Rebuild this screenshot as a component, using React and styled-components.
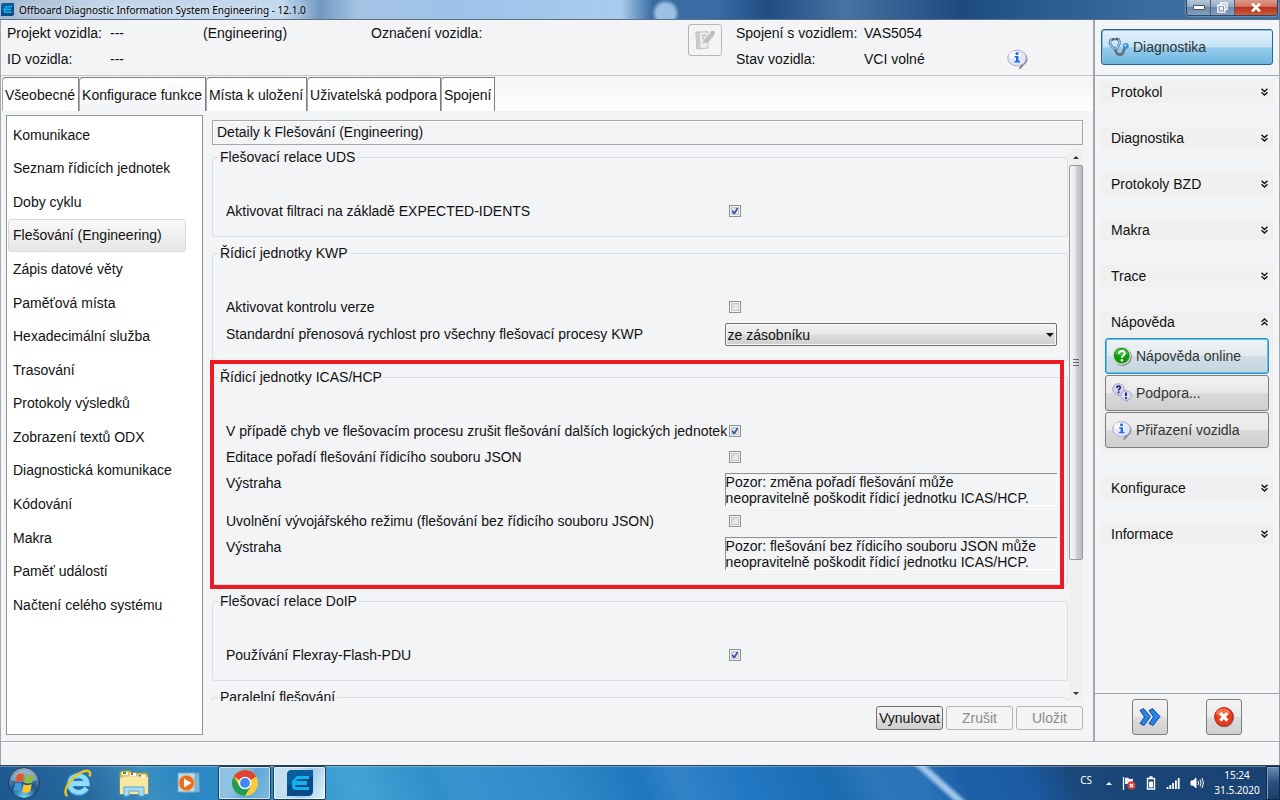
import * as React from 'react'
import styled, { createGlobalStyle, css } from 'styled-components'

const GlobalStyle = createGlobalStyle`
  *, *::before, *::after {
    box-sizing: border-box;
  }
  body {
    margin: 0;
    font-family: "Liberation Sans", Arial, sans-serif;
    font-size: 14px;
    line-height: 18px;
    color: #111;
    background: #f3f4f6;
  }
  button, input, select, textarea {
    font: inherit;
    color: inherit;
    margin: 0;
  }
`

const Screen = styled.div`
  height: 100vh;
  display: flex;
  flex-direction: column;
`

/* ---------- title bar ---------- */

const TitleBar = styled.header`
  height: 20px;
  flex: none;
  display: flex;
  align-items: center;
  gap: 5px;
  padding: 0 2px 0 1px;
  border-bottom: 1px solid #5e6f86;
  background:
    radial-gradient(circle at 52% 70%, #9cc0e4 0 9px, transparent 14px),
    linear-gradient(90deg, #a3b7d0 0, #c3d5e8 8%, #c2d8ee 22%, #7399c2 25%, #a4c3e4 28%, #9dc3e9 36%, #a9cbed 48.5%, #3a6ca3 51%, #3c6ba3 56%, #1f4d84 60%, #4573a2 66%, #1d4b80 75%, #2b5c92 82%, #3c6ca0 90%, #416f9f 100%);
`

const Title = styled.h1`
  flex: 1;
  margin: 0;
  font: 10px/18px "Noto Sans", sans-serif;
  color: #000;
  text-shadow: 0 0 6px #fff;
`

const WindowButtons = styled.div`
  display: flex;
  align-self: flex-start;
  height: 16px;
  border: 1px solid #31455c;
  border-top: 0;
  border-radius: 0 0 4px 4px;
  overflow: hidden;
  box-shadow: 0 0 2px #cfe0f0;
`

const WindowButton = styled.button`
  width: ${p => (p.$close ? 42 : 24)}px;
  padding: 0;
  display: flex;
  align-items: center;
  justify-content: center;
  border: 0;
  border-right: ${p => (p.$close ? 0 : '1px solid #4b5f76')};
  background: ${p => (p.$close
    ? 'linear-gradient(#dd9a8d, #d0705e 45%, #b8331c 50%, #cf5a3c)'
    : 'linear-gradient(#b6c6d8, #93a9c2 45%, #6c88a8 50%, #86a1bf)')};
`

/* ---------- application frame ---------- */

const Frame = styled.div`
  flex: 1;
  min-height: 0;
  display: flex;
  border-left: 1px solid #a5a8ad;
  border-right: 1px solid #a5a8ad;
`

const Main = styled.main`
  flex: 1;
  min-width: 0;
  display: flex;
  flex-direction: column;
`

const VehicleHeader = styled.section`
  height: 56px;
  flex: none;
  display: grid;
  grid-template-columns: 103fr 93fr 168fr 317fr 48fr 128fr 143fr 86fr;
  grid-template-rows: 26px 26px;
  align-items: center;
  padding-left: 6px;
  border-bottom: 1px solid #c4c6ca;
  white-space: nowrap;
`

const HeaderText = styled.span`
  grid-column: ${p => p.$col};
  grid-row: ${p => p.$row};
`

const HeaderIcon = styled(HeaderText)`
  display: flex;
`

const NoteButton = styled.button`
  grid-column: 5;
  grid-row: 1 / span 2;
  align-self: start;
  width: 34px;
  height: 32px;
  margin-top: 4px;
  padding: 0;
  display: flex;
  align-items: center;
  justify-content: center;
  border: 1px solid #b3b7ba;
  border-radius: 3px;
  background: #f4f4f4;
`

const TabStrip = styled.div`
  height: 35px;
  flex: none;
  display: flex;
  align-items: stretch;
  padding: 1px 0 0 1px;
  background: linear-gradient(#f3f4f6, #fff);
`

const Tab = styled.button`
  padding: 0 3px;
  white-space: nowrap;
  border: 1px solid #7d7f83;
  border-width: 1px 1px 0 0;
  border-radius: 4px 0 0 0;
  box-shadow: inset 1px 0 0 #a5a8ad;
  background: ${p => (p.$active ? 'linear-gradient(#fff, #f3f4f6)' : '#fff')};
`

const Workspace = styled.div`
  flex: 1;
  min-height: 0;
  display: flex;
  gap: 7px;
  padding: 4px 10px 6px 5px;
`

const FunctionList = styled.nav`
  width: 197px;
  flex: none;
  border: 1px solid #8f949c;
  background: #fff;
  padding: 2px 1px;
`

const FunctionItems = styled.ul`
  height: 82%;
  margin: 0;
  padding: 0;
  list-style: none;
  display: grid;
  grid-auto-rows: 1fr;
`

const FunctionItem = styled.button`
  width: 178px;
  height: 100%;
  padding: 0 4px;
  text-align: left;
  white-space: nowrap;
  border: 1px solid transparent;
  border-radius: 3px;
  background: none;
  ${p => p.$selected && css`
    border-color: #d9d9d9;
    background: linear-gradient(#f9f9f9, #e6e6e6);
  `}
`

/* ---------- details ---------- */

const Details = styled.section`
  flex: 1;
  min-width: 0;
  display: flex;
  flex-direction: column;
  padding: 5px 0;
`

const DetailsTitle = styled.h2`
  margin: 0 0 4px 2px;
  padding: 0 4px;
  border: 1px solid #a4a7ab;
  box-shadow: inset 1px 1px 0 #fff;
  font-size: 14px;
  font-weight: normal;
  line-height: 23px;
`

const ScrollArea = styled.div`
  flex: 1;
  min-height: 0;
  display: flex;
`

const Viewport = styled.div`
  flex: 1;
  min-width: 0;
  overflow: hidden;
  padding-left: 2px;
`

const Group = styled.fieldset`
  position: relative;
  min-width: 0;
  margin: 0 1px 8px 0;
  padding: 35px 10px 14px 13px;
  border: 1px solid #d5dfe5;
  border-radius: 3px;
`

const Legend = styled.legend`
  margin-left: -8px;
  padding: 0 2px;
  line-height: 17px;
`

const Rows = styled.div`
  display: flex;
  flex-direction: column;
  gap: 5px;
`

const Row = styled.div`
  display: grid;
  grid-template-columns: minmax(0, 3fr) minmax(0, 2fr);
  align-items: ${p => (p.$top ? 'start' : 'center')};
  min-height: 21px;
`

const RowLabel = styled.label`
  white-space: nowrap;
  line-height: 21px;
`

const CheckBox = styled.input`
  appearance: none;
  width: 12px;
  height: 12px;
  margin: 0 0 2px 4px;
  border: 1px solid #8d8f92;
  box-shadow: inset 0 0 0 1px #f4f4f4, inset 0 0 0 2px #c3c7cc;
  background: linear-gradient(135deg, #cdd1d6, #f8f8f8);
  &:checked {
    background:
      no-repeat center / 10px 10px url("data:image/svg+xml,%3Csvg xmlns='http://www.w3.org/2000/svg' viewBox='0 0 10 10'%3E%3Cpath d='M2.2 4.6 4.2 7.8 7.8 1.6' fill='none' stroke='%23354f9c' stroke-width='1.7'/%3E%3C/svg%3E"),
      linear-gradient(135deg, #cdd1d6, #f8f8f8);
  }
`

const SelectBox = styled.div`
  display: grid;
  align-items: center;
  > * {
    grid-area: 1 / 1;
  }
  > svg {
    justify-self: end;
    margin-right: 3px;
    pointer-events: none;
  }
`

const Select = styled.select`
  appearance: none;
  width: 100%;
  height: 23px;
  padding: 0 2px;
  border: 1px solid #707070;
  border-radius: 2px;
  box-shadow: inset 0 0 0 1px #fafafa;
  background: linear-gradient(#f1f1f1, #e8e8e8 48%, #dcdcdc 52%, #cfcfcf);
`

const Warning = styled.textarea`
  display: block;
  width: 100%;
  height: 33px;
  padding: 0;
  resize: none;
  overflow: hidden;
  white-space: pre;
  line-height: 16px;
  border: 0 solid #8c8e92;
  border-width: 1px 0 0 1px;
  box-shadow: inset -1px -1px 0 #fff;
  background: transparent;
`

const Highlight = styled.div`
  position: absolute;
  inset: -26px 3px -5px -3px;
  border: 4px solid #ed1c24;
  pointer-events: none;
`

const ScrollBar = styled.div`
  width: 14px;
  flex: none;
  display: flex;
  flex-direction: column;
  background: #efeff0;
`

const ScrollButton = styled.button`
  height: 16px;
  flex: none;
  padding: 0;
  display: flex;
  align-items: center;
  justify-content: center;
  border: 0;
  background: none;
`

const ScrollTrack = styled.div`
  flex: 1;
  min-height: 0;
`

const ScrollThumb = styled.div`
  height: 76%;
  display: flex;
  align-items: center;
  justify-content: center;
  border: 1px solid #97999d;
  border-radius: 2px;
  background: linear-gradient(90deg, #f6f6f6, #e6e6e8 45%, #cfd0d3 55%, #b9babe);
`

const Actions = styled.div`
  display: flex;
  justify-content: flex-end;
  gap: 3px;
  padding-top: 5px;
`

const ActionButton = styled.button`
  width: 67px;
  height: 24px;
  padding: 0;
  border: 1px solid #707070;
  border-radius: 3px;
  background: linear-gradient(#f3f3f3, #ebebeb 48%, #dddddd 52%, #cfcfcf);
  &:disabled {
    color: #8b8b8b;
    border-color: #b2b5b8;
    background: #f4f4f4;
  }
`

/* ---------- right side ---------- */

const Side = styled.aside`
  width: 186px;
  flex: none;
  display: flex;
  flex-direction: column;
  border-left: 2px solid #a2a5ac;
`

const SideTop = styled.div`
  height: 56px;
  flex: none;
  padding: 9px 6px 0;
  border-bottom: 1px solid #a2a5ac;
`

const ModeButton = styled.button`
  width: 100%;
  height: 36px;
  padding: 0 6px;
  display: flex;
  align-items: center;
  gap: 4px;
  color: #333;
  border: 1px solid #2c628b;
  border-radius: 3px;
  box-shadow: inset 1px 1px 0 #8fc0dd;
  background: linear-gradient(#e4f3fb, #c4e3f5 50%, #98cfee 52%, #6cb5de);
`

const Sections = styled.div`
  flex: 1;
  min-height: 0;
  padding: 5px;
  display: flex;
  flex-direction: column;
  gap: 24px;
`

const Section = styled.section`
  background: #f0f0f0;
`

const SectionToggle = styled.button`
  width: 100%;
  height: 22px;
  padding: 0 5px 0 11px;
  display: flex;
  align-items: center;
  justify-content: space-between;
  border: 0;
  background: none;
`

const SectionBody = styled.div`
  display: flex;
  flex-direction: column;
  gap: 1px;
  padding: 5px;
`

const HelpButton = styled.button`
  height: 36px;
  padding: 0 6px;
  display: flex;
  align-items: center;
  gap: 4px;
  color: #333;
  white-space: nowrap;
  border: 1px solid #7b7d80;
  border-radius: 3px;
  background: linear-gradient(#f0f0f0, #e9e9e9 49%, #dadada 51%, #cecece);
  > svg {
    width: 20px;
  }
  ${p => p.$focus && css`
    border-color: #2a8dc0;
    box-shadow: inset 0 0 0 1px #5cc3ec;
    background: linear-gradient(#eff2f4, #e3ebf0 49%, #d0dfe7 51%, #c5d5de);
  `}
`

const SideBottom = styled.div`
  height: 48px;
  flex: none;
  display: flex;
  justify-content: space-evenly;
  padding-top: 5px;
  border-top: 1px solid #a2a5ac;
`

const SquareButton = styled.button`
  width: 36px;
  height: 36px;
  padding: 0;
  display: flex;
  align-items: center;
  justify-content: center;
  border: 1px solid #7b7d80;
  border-radius: 3px;
  background: linear-gradient(#f3f3f3, #ebebeb 48%, #dddddd 52%, #cfcfcf);
`

const StatusBar = styled.footer`
  height: 24px;
  flex: none;
  border: 1px solid #a2a5ac;
  border-bottom: 0;
  box-shadow: inset 0 1px 0 #fff;
`

/* ---------- taskbar ---------- */

const TaskBar = styled.div`
  height: 35px;
  flex: none;
  display: flex;
  align-items: stretch;
  border-top: 1px solid #33404c;
  background:
    linear-gradient(rgba(255, 255, 255, .3) 0 1px, transparent 1px),
    linear-gradient(42deg, transparent 41%, #9cc4ea 48% 52%, transparent 59%) 74.6% 0 / 60px 100% no-repeat,
    linear-gradient(65deg, #1c588f 0, #28699f 7%, #3a8fc0 12%, #2a86c4 15%, #2f8fca 22%, #41a3d5 28%, #2e90c8 34%, #3a93cf 36%, #2f88c9 44%, #1f78bb 50%, #3483c9 53%, #2178c2 58%, #1c6cb2 65%, #2d76ba 68%, #2a73b8 72%, #1b5fa9 75%, #1b5ba3 80%, #1a4678 84%, #1a4272 100%);
`

const TaskButton = styled.button`
  width: ${p => p.$width}px;
  padding: 0;
  display: flex;
  align-items: center;
  justify-content: center;
  border: 0;
  background: none;
  ${p => p.$open && css`
    margin-right: 2px;
    border: 1px solid #1d3c55;
    border-radius: 2px;
    box-shadow: inset 0 0 0 1px rgba(255, 255, 255, .6);
    background: ${p.$current
      ? 'linear-gradient(115deg, #c3dff0 0 35%, #9fcbe6 60%, #e4f2fa)'
      : 'linear-gradient(115deg, #8fc2e2 0 35%, #5fa9d6 60%, #7fbbdf)'};
  `}
`

const Tray = styled.div`
  margin: 0 6px 0 auto;
  display: flex;
  align-items: center;
  gap: 10px;
  color: #fff;
  font: 10px/15px "Noto Sans", sans-serif;
`

const Language = styled.span`
  margin: 0 4px 6px 0;
`

const Clock = styled.time`
  width: 46px;
  text-align: center;
`

const ShowDesktop = styled.button`
  width: 13px;
  border: 1px solid #0d2a4c;
  box-shadow: inset 1px 1px 0 #7f9dbd;
  background: linear-gradient(#6d8cae, #2a4f7c 50%, #1d3f6b);
`

/* ---------- icons ---------- */

const AppIcon = ({ size }) => (
  <svg width={size} height={size} viewBox="0 0 26 26">
    <path d="M5 0H26V21Q26 26 21 26H0V5Q0 0 5 0Z" fill="#064a87" />
    <path d="M0 16V5Q0 0 5 0H26V6Z" fill="#0d6cab" opacity=".6" />
    <path d="M22 6H10L5 11V16Q5 20 9 20H22V17H10Q8 17 8 15H20V11H8.500L10.500 9H22Z" fill="#14b0ee" />
  </svg>
)

const NoteIcon = () => (
  <svg width="20" height="20" viewBox="0 0 20 20" fill="none" stroke="#c4c4c4">
    <path d="M1 2.500 13 1.500 13 18 2 19Z" fill="#ececec" />
    <path d="M1 2.500 4 1.500 5 18.500 2 19Z" fill="#cfcfcf" />
    <path d="M7 5.500H11M7 8.500H9" strokeWidth="2" />
    <path d="M8 13 10 9 16 3 19 5 13 12Z" fill="#c0c0c0" />
    <circle cx="17.500" cy="3" r="2" fill="#bdbdbd" />
  </svg>
)

const InfoBubble = () => (
  <svg width="21" height="21" viewBox="0 0 21 21">
    <path d="M11 2.500C17 2.500 20.500 6 20.500 10 20.500 13.500 18 15 16.500 16.500 15.500 18 14 20 11.500 20.500 12.500 19 13 17.500 12.500 16.500Z" fill="#8a8a94" />
    <ellipse cx="10" cy="9" rx="9.300" ry="7.800" fill="#e4e5fb" stroke="#a9abcd" />
    <path d="M9 16.500 13.500 15.500 11.500 19.500Q13 17 9 16.500Z" fill="#c9caea" />
    <ellipse cx="8" cy="6" rx="6" ry="4" fill="#fff" opacity=".8" />
    <circle cx="10" cy="4.500" r="1.600" fill="#1a6ee0" />
    <path d="M7.500 7H11.500V12H13V13.500H7.500V12H9V8.500H7.500Z" fill="#1a6ee0" />
  </svg>
)

const Stethoscope = () => (
  <svg width="21" height="20" viewBox="0 0 21 20" fill="none">
    <path d="M5 2.500 2.500 3C1 6 3 10 7.500 12.500 11 9 12.500 5 10.500 2.500L8.500 2" stroke="#55789f" strokeWidth="2.600" />
    <path d="M5 2.500 2.500 3C1 6 3 10 7.500 12.500 11 9 12.500 5 10.500 2.500" stroke="#a9cdee" strokeWidth="1.200" />
    <path d="M7.500 12C7.500 16 10 18 13 17.500 16 17 15 12 17.500 11" stroke="#6b6f78" strokeWidth="2.800" />
    <circle cx="5.500" cy="2.200" r="1.300" fill="#555" />
    <circle cx="8.500" cy="2" r="1.300" fill="#555" />
    <circle cx="17.800" cy="9" r="3" fill="#3f8ede" />
    <circle cx="17.300" cy="8.200" r="1.200" fill="#a8d2f8" />
  </svg>
)

const HelpIcon = () => (
  <svg width="20" height="20" viewBox="0 0 20 20">
    <circle cx="10.500" cy="10.500" r="9.300" fill="#777" />
    <circle cx="9.700" cy="9.700" r="9.300" fill="#d9ddd9" />
    <circle cx="9.700" cy="9.700" r="7.900" fill="#139a12" />
    <path d="M3 8A7 7 0 0 1 16.500 8Q10 11 3 8Z" fill="#4cc944" opacity=".7" />
    <path d="M7 7.800C7 4 12.800 4 12.600 7.600 12.500 9.500 9.900 9.600 9.900 11.800" fill="none" stroke="#fff" strokeWidth="2" />
    <circle cx="9.900" cy="14.300" r="1.200" fill="#fff" />
  </svg>
)

const SupportIcon = () => (
  <svg width="20" height="20" viewBox="0 0 20 20">
    <path d="M4 10 7 14 8 10Z" fill="#a9aace" />
    <ellipse cx="6.500" cy="6" rx="5.800" ry="5.300" fill="#d3d4f5" stroke="#a2a4cd" />
    <path d="M4.800 5C4.800 2.400 8.500 2.600 8.300 4.800 8.200 6 6.600 6 6.600 7.500" fill="none" stroke="#16164a" strokeWidth="1.500" />
    <circle cx="6.600" cy="9.200" r=".9" fill="#16164a" />
    <path d="M13 16 15 20 17 15Z" fill="#a9aace" />
    <ellipse cx="14" cy="12.500" rx="5.300" ry="4.800" fill="#d9daf8" stroke="#a2a4cd" />
    <path d="M14 9.500V13" stroke="#16164a" strokeWidth="1.700" />
    <circle cx="14" cy="15" r="1" fill="#16164a" />
  </svg>
)

const Chevrons = ({ up }) => (
  <svg width="9" height="8" viewBox="0 0 9 8" fill="none" stroke="#111" strokeWidth="1.300">
    {up
      ? <path d="M1.500 3.800 4.500 1 7.500 3.800M1.500 7.300 4.500 4.500 7.500 7.300" />
      : <path d="M1.500.700 4.500 3.500 7.500.700M1.500 4.200 4.500 7 7.500 4.200" />}
  </svg>
)

const Arrow = ({ up, size = 8, color = '#333' }) => (
  <svg width={size} height={size / 2} viewBox="0 0 8 4">
    <path d={up ? 'M0 4 4 0 8 4Z' : 'M0 0H8L4 4Z'} fill={color} />
  </svg>
)

const Grip = () => (
  <svg width="6" height="8" viewBox="0 0 6 8" stroke="#66686c">
    <path d="M0 .500H6M0 3.500H6M0 6.500H6" />
  </svg>
)

const ForwardIcon = () => (
  <svg width="22" height="20" viewBox="0 0 22 20" fill="#2583e8" stroke="#134c9c" strokeLinejoin="round">
    <path d="M1 3.500 4.500 1.500 11.500 9.500 5 18.500 1 16.500 5.500 10Z" />
    <path d="M10 3.500 13.500 1.500 21 9.500 14 18.500 10 16.500 14.500 10Z" />
  </svg>
)

const CloseIcon = () => (
  <svg width="22" height="22" viewBox="0 0 22 22">
    <circle cx="11.500" cy="11.500" r="9.800" fill="#8d8d8d" />
    <circle cx="10.800" cy="10.800" r="9.700" fill="#c42310" />
    <circle cx="10.800" cy="10.800" r="8.700" fill="#ea3a1c" />
    <ellipse cx="10" cy="6.500" rx="7" ry="4" fill="#ff8a66" opacity=".7" />
    <path d="M7.300 7 14.300 14.600M14.300 7 7.300 14.600" stroke="#fff" strokeWidth="3.200" />
  </svg>
)

const StartOrb = () => (
  <svg width="34" height="34" viewBox="0 0 34 34">
    <defs>
      <radialGradient id="orb" cx=".5" cy=".95" r=".9">
        <stop offset="0" stopColor="#6fd8f4" />
        <stop offset=".5" stopColor="#1b5385" />
        <stop offset="1" stopColor="#8fa9bd" />
      </radialGradient>
    </defs>
    <circle cx="17" cy="17" r="15.500" fill="url(#orb)" stroke="#16395a" />
    <path d="M4 14A13.500 13.500 0 0 1 30 14Q17 19 4 14Z" fill="#d9e6ef" opacity=".35" />
    <path d="M10 9Q13.500 6.500 17 8.500L15.500 16Q12 14 8.500 16.500Z" fill="#e8562a" />
    <path d="M18.500 9Q22 11 27 8.500L25.200 16.500Q21 18.500 17 16.500Z" fill="#8fc043" />
    <path d="M8 18Q11.500 15.800 15 17.800L13.500 25.500Q10 23.500 6.500 25.500Z" fill="#3f9ae0" />
    <path d="M16.600 18.300Q20.500 20.300 24.800 18L23 25.800Q19 28 15 26Z" fill="#fbc52d" />
  </svg>
)

const Explorer = () => (
  <svg width="30" height="30" viewBox="0 0 30 30" fill="none">
    <path d="M24 20.500C19 28 6.500 26 6.500 15.500 6.500 5 23 4 24 15.500H9" stroke="#2a86c8" strokeWidth="6.500" />
    <path d="M23.500 20C18.500 27 7 25.500 7 15.500 7 5.500 23 5 24 15.500H9" stroke="#8fdcf8" strokeWidth="4.800" />
    <path d="M4.500 28C-2 24 8 8 20 3.500 26 1.500 28.500 4 26.500 8.500" stroke="#f3c21c" strokeWidth="2.400" />
  </svg>
)

const FolderIcon = () => (
  <svg width="30" height="28" viewBox="0 0 30 28">
    <path d="M1 4Q1 2 3 2H11L13 4H26Q29 4 29 7V25H1Z" fill="#e3c56a" stroke="#b59339" />
    <path d="M3 3H9V6H3ZM11 4H17V7H11ZM20 6H26V8H20Z" fill="#fff" />
    <path d="M4 3H7V5H4Z" fill="#2f9e3f" />
    <path d="M12 4H14V6H12Z" fill="#d6482b" />
    <path d="M20 6H22V8H20Z" fill="#2d7fd0" />
    <path d="M1 9Q10 6 29 8V25H1Z" fill="#f8e7a1" />
    <path d="M5 18H25V27H20V22H10V27H5Z" fill="#a9dcf3" stroke="#5ba6cf" />
  </svg>
)

const PlayerIcon = () => (
  <svg width="26" height="24" viewBox="0 0 26 24">
    <path d="M7 2H23L24 21 8 22Z" fill="#7fb8da" stroke="#5793b8" />
    <path d="M2 2H19V21H2Z" fill="#b8dcf0" stroke="#6ca6c8" />
    <circle cx="10.500" cy="12" r="7.800" fill="#ef6c1a" stroke="#fbb27a" />
    <path d="M8 7.500V16.500L15.500 12Z" fill="#fff" />
  </svg>
)

const ChromeIcon = () => (
  <svg width="28" height="28" viewBox="0 0 28 28">
    <circle cx="14" cy="14" r="13" fill="#fbc93a" />
    <path d="M14 14 2.740 7.500A13 13 0 0 1 25.260 7.500Z" fill="#dd4436" />
    <path d="M2.740 7.500A13 13 0 0 0 14 27L19.600 17.200 8.400 17.300Z" fill="#1f9d58" />
    <circle cx="14" cy="14" r="6.300" fill="#fff" />
    <circle cx="14" cy="14" r="4.900" fill="#4385f3" />
  </svg>
)

const FlagIcon = () => (
  <svg width="14" height="14" viewBox="0 0 14 14">
    <path d="M1.500 1V14" stroke="#fff" strokeWidth="1.300" />
    <path d="M3 2Q5 1 7 2.500 9 3.500 11 2.500V8H3Z" fill="#eee" />
    <circle cx="9.500" cy="9.500" r="4.300" fill="#d8342a" />
    <path d="M7.800 7.800 11.200 11.200M11.200 7.800 7.800 11.200" stroke="#fff" strokeWidth="1.400" />
  </svg>
)

const BatteryIcon = () => (
  <svg width="10" height="14" viewBox="0 0 10 14" fill="none" stroke="#fff">
    <path d="M3.500 1H6.500M1.500 2.500H8.500V13H1.500Z" strokeWidth="1.400" />
    <path d="M3.500 6H6.500V11H3.500Z" fill="#fff" />
  </svg>
)

const SignalIcon = () => (
  <svg width="14" height="12" viewBox="0 0 14 12" stroke="#fff" strokeWidth="1.800">
    <path d="M1.500 12V10M4.300 12V8M7.100 12V6M9.900 12V3.500M12.700 12V1" />
  </svg>
)

const SpeakerIcon = () => (
  <svg width="14" height="12" viewBox="0 0 14 12" fill="none" stroke="#fff">
    <path d="M1 4H3L6 1V11L3 8H1Z" fill="#fff" />
    <path d="M8 4Q9.300 6 8 8M10 2.500Q12.200 6 10 9.500M12 1Q15 6 12 11" />
  </svg>
)

/* ---------- data ---------- */

const FUNCTIONS = [
  'Komunikace',
  'Seznam řídicích jednotek',
  'Doby cyklu',
  'Flešování (Engineering)',
  'Zápis datové věty',
  'Paměťová místa',
  'Hexadecimální služba',
  'Trasování',
  'Protokoly výsledků',
  'Zobrazení textů ODX',
  'Diagnostická komunikace',
  'Kódování',
  'Makra',
  'Paměť událostí',
  'Načtení celého systému'
]

const TABS = ['Všeobecné', 'Konfigurace funkce', 'Místa k uložení', 'Uživatelská podpora', 'Spojení']

const GROUPS = [
  {
    title: 'Flešovací relace UDS',
    rows: [{ id: 'idents', type: 'check', label: 'Aktivovat filtraci na základě EXPECTED-IDENTS', checked: true }]
  },
  {
    title: 'Řídicí jednotky KWP',
    rows: [
      { id: 'version', type: 'check', label: 'Aktivovat kontrolu verze' },
      { id: 'rate', type: 'select', label: 'Standardní přenosová rychlost pro všechny flešovací procesy KWP', value: 'ze zásobníku' }
    ]
  },
  {
    title: 'Řídicí jednotky ICAS/HCP',
    highlighted: true,
    rows: [
      { id: 'abort', type: 'check', label: 'V případě chyb ve flešovacím procesu zrušit flešování dalších logických jednotek', checked: true },
      { id: 'order', type: 'check', label: 'Editace pořadí flešování řídicího souboru JSON' },
      { id: 'orderWarning', type: 'warning', label: 'Výstraha', value: 'Pozor: změna pořadí flešování může\nneopravitelně poškodit řídicí jednotku ICAS/HCP.' },
      { id: 'developer', type: 'check', label: 'Uvolnění vývojářského režimu (flešování bez řídicího souboru JSON)' },
      { id: 'developerWarning', type: 'warning', label: 'Výstraha', value: 'Pozor: flešování bez řídicího souboru JSON může\nneopravitelně poškodit řídicí jednotku ICAS/HCP.' }
    ]
  },
  {
    title: 'Flešovací relace DoIP',
    rows: [{ id: 'flexray', type: 'check', label: 'Používání Flexray-Flash-PDU', checked: true }]
  },
  {
    title: 'Paralelní flešování',
    rows: []
  }
]

const HELP = [
  { text: 'Nápověda online', icon: <HelpIcon />, focus: true },
  { text: 'Podpora...', icon: <SupportIcon /> },
  { text: 'Přiřazení vozidla', icon: <InfoBubble /> }
]

const SECTIONS = ['Protokol', 'Diagnostika', 'Protokoly BZD', 'Makra', 'Trace', 'Nápověda', 'Konfigurace', 'Informace']

const Control = ({ row }) => {
  if (row.type === 'select')
    return (
      <SelectBox>
        <Select id={row.id} defaultValue={row.value}>
          <option>{row.value}</option>
        </Select>
        <Arrow color="#111" />
      </SelectBox>
    )
  if (row.type === 'warning')
    return <Warning id={row.id} readOnly value={row.value} />
  return <CheckBox id={row.id} type="checkbox" defaultChecked={row.checked} />
}

const SettingsGroup = ({ group }) => (
  <Group>
    <Legend>{group.title}</Legend>
    <Rows>
      {group.rows.map(row => (
        <Row key={row.id} $top={row.type === 'warning'}>
          <RowLabel htmlFor={row.id}>{row.label}</RowLabel>
          <Control row={row} />
        </Row>
      ))}
    </Rows>
    {group.highlighted && <Highlight />}
  </Group>
)

const App = () => {
  const [selected, setSelected] = React.useState('Flešování (Engineering)')
  const [tab, setTab] = React.useState('Konfigurace funkce')
  const [open, setOpen] = React.useState('Nápověda')

  return (
    <Screen>
      <GlobalStyle />
      <TitleBar>
        <AppIcon size={13} />
        <Title>Offboard Diagnostic Information System Engineering - 12.1.0</Title>
        <WindowButtons>
          <WindowButton aria-label="Minimalizovat">
            <svg width="12" height="5" viewBox="0 0 12 5">
              <path d="M.500.500H11.500V4.500H.500Z" fill="#fff" stroke="#44566b" />
            </svg>
          </WindowButton>
          <WindowButton aria-label="Obnovit">
            <svg width="11" height="11" viewBox="0 0 12 12" fill="none" stroke="#fff" strokeWidth="1.500">
              <path d="M4 3V1H11V8H9M1 3.500H8.500V11H1ZM3.800 6.200H5.800V8.200H3.800Z" />
            </svg>
          </WindowButton>
          <WindowButton $close aria-label="Zavřít">
            <svg width="10" height="9" viewBox="0 0 10 9" stroke="#fff" strokeWidth="2.600">
              <path d="M1 .500 9 8.500M9 .500 1 8.500" />
            </svg>
          </WindowButton>
        </WindowButtons>
      </TitleBar>

      <Frame>
        <Main>
          <VehicleHeader>
            <HeaderText $col={1} $row={1}>Projekt vozidla:</HeaderText>
            <HeaderText $col={2} $row={1}>---</HeaderText>
            <HeaderText $col={3} $row={1}>(Engineering)</HeaderText>
            <HeaderText $col={4} $row={1}>Označení vozidla:</HeaderText>
            <HeaderText $col={1} $row={2}>ID vozidla:</HeaderText>
            <HeaderText $col={2} $row={2}>---</HeaderText>
            <NoteButton disabled aria-label="Poznámka"><NoteIcon /></NoteButton>
            <HeaderText $col={6} $row={1}>Spojení s vozidlem:</HeaderText>
            <HeaderText $col={7} $row={1}>VAS5054</HeaderText>
            <HeaderText $col={6} $row={2}>Stav vozidla:</HeaderText>
            <HeaderText $col={7} $row={2}>VCI volné</HeaderText>
            <HeaderIcon $col={8} $row={2}><InfoBubble /></HeaderIcon>
          </VehicleHeader>

          <TabStrip role="tablist">
            {TABS.map(name => (
              <Tab key={name} role="tab" aria-selected={name === tab} $active={name === tab} onClick={() => setTab(name)}>
                {name}
              </Tab>
            ))}
          </TabStrip>

          <Workspace>
            <FunctionList>
              <FunctionItems>
                {FUNCTIONS.map(name => (
                  <li key={name}>
                    <FunctionItem $selected={name === selected} onClick={() => setSelected(name)}>{name}</FunctionItem>
                  </li>
                ))}
              </FunctionItems>
            </FunctionList>

            <Details>
              <DetailsTitle>Detaily k Flešování (Engineering)</DetailsTitle>
              <ScrollArea>
                <Viewport>
                  {GROUPS.map(group => <SettingsGroup key={group.title} group={group} />)}
                </Viewport>
                <ScrollBar>
                  <ScrollButton aria-label="Nahoru"><Arrow up size={6} /></ScrollButton>
                  <ScrollTrack>
                    <ScrollThumb><Grip /></ScrollThumb>
                  </ScrollTrack>
                  <ScrollButton aria-label="Dolů"><Arrow size={6} /></ScrollButton>
                </ScrollBar>
              </ScrollArea>
              <Actions>
                <ActionButton>Vynulovat</ActionButton>
                <ActionButton disabled>Zrušit</ActionButton>
                <ActionButton disabled>Uložit</ActionButton>
              </Actions>
            </Details>
          </Workspace>
        </Main>

        <Side>
          <SideTop>
            <ModeButton><Stethoscope />Diagnostika</ModeButton>
          </SideTop>
          <Sections>
            {SECTIONS.map(name => (
              <Section key={name}>
                <SectionToggle aria-expanded={name === open} onClick={() => setOpen(name)}>
                  {name}
                  <Chevrons up={name === open} />
                </SectionToggle>
                {name === 'Nápověda' && open === name && (
                  <SectionBody>
                    {HELP.map(item => (
                      <HelpButton key={item.text} $focus={item.focus}>{item.icon}{item.text}</HelpButton>
                    ))}
                  </SectionBody>
                )}
              </Section>
            ))}
          </Sections>
          <SideBottom>
            <SquareButton aria-label="Další"><ForwardIcon /></SquareButton>
            <SquareButton aria-label="Ukončit"><CloseIcon /></SquareButton>
          </SideBottom>
        </Side>
      </Frame>

      <StatusBar />

      <TaskBar>
        <TaskButton $width={48} aria-label="Start"><StartOrb /></TaskButton>
        <TaskButton $width={60} aria-label="Internet Explorer"><Explorer /></TaskButton>
        <TaskButton $width={52} aria-label="Průzkumník"><FolderIcon /></TaskButton>
        <TaskButton $width={58} aria-label="Přehrávač"><PlayerIcon /></TaskButton>
        <TaskButton $width={53} $open aria-label="Chrome"><ChromeIcon /></TaskButton>
        <TaskButton $width={53} $open $current aria-label="ODIS"><AppIcon size={26} /></TaskButton>
        <Tray>
          <Language>CS</Language>
          <Arrow up size={6} color="#fff" />
          <FlagIcon />
          <BatteryIcon />
          <SignalIcon />
          <SpeakerIcon />
          <Clock>15:24<br />31.5.2020</Clock>
        </Tray>
        <ShowDesktop aria-label="Zobrazit plochu" />
      </TaskBar>
    </Screen>
  )
}

export default App
